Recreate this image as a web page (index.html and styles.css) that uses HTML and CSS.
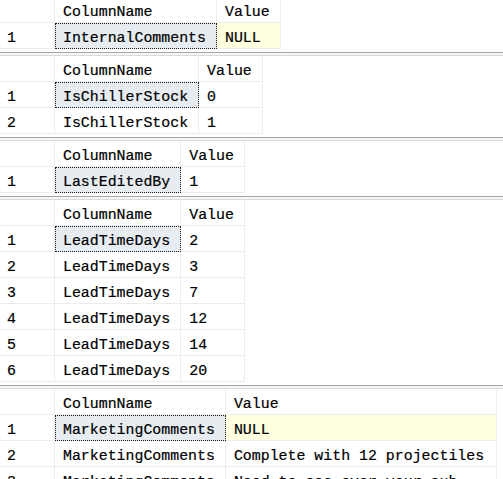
FILE: index.html
```html
<!DOCTYPE html>
<html>
<head>
<meta charset="utf-8">
<link rel="stylesheet" href="styles.css">
</head>
<body>
<div class="pane">
  <div class="grid first">
    <table>
      <tr class="head"><th class="rn"></th><th>ColumnName</th><th>Value</th></tr>
      <tr><td class="rn">1</td><td class="sel">InternalComments</td><td class="null">NULL</td></tr>
    </table>
  </div>
  <div class="splitter"></div>
  <div class="grid">
    <table>
      <tr class="head"><th class="rn"></th><th>ColumnName</th><th>Value</th></tr>
      <tr><td class="rn">1</td><td class="sel">IsChillerStock</td><td>0</td></tr>
      <tr><td class="rn">2</td><td>IsChillerStock</td><td>1</td></tr>
    </table>
  </div>
  <div class="splitter"></div>
  <div class="grid">
    <table>
      <tr class="head"><th class="rn"></th><th>ColumnName</th><th>Value</th></tr>
      <tr><td class="rn">1</td><td class="sel">LastEditedBy</td><td>1</td></tr>
    </table>
  </div>
  <div class="splitter"></div>
  <div class="grid">
    <table>
      <tr class="head"><th class="rn"></th><th>ColumnName</th><th>Value</th></tr>
      <tr><td class="rn">1</td><td class="sel">LeadTimeDays</td><td>2</td></tr>
      <tr><td class="rn">2</td><td>LeadTimeDays</td><td>3</td></tr>
      <tr><td class="rn">3</td><td>LeadTimeDays</td><td>7</td></tr>
      <tr><td class="rn">4</td><td>LeadTimeDays</td><td>12</td></tr>
      <tr><td class="rn">5</td><td>LeadTimeDays</td><td>14</td></tr>
      <tr><td class="rn">6</td><td>LeadTimeDays</td><td>20</td></tr>
    </table>
  </div>
  <div class="splitter"></div>
  <div class="grid">
    <table>
      <tr class="head"><th class="rn"></th><th>ColumnName</th><th class="wide">Value</th></tr>
      <tr><td class="rn">1</td><td class="sel">MarketingComments</td><td class="null">NULL</td></tr>
      <tr><td class="rn">2</td><td>MarketingComments</td><td>Complete with 12 projectiles</td></tr>
      <tr><td class="rn">3</td><td>MarketingComments</td><td>Need to see over your sub</td></tr>
    </table>
  </div>
</div>
</body>
</html>
```

FILE: styles.css
```css
html, body {
  margin: 0;
  padding: 0;
  background: #ffffff;
  overflow: hidden;
}

.pane {
  width: 503px;
  height: 479px;
  overflow: hidden;
  font-family: "Liberation Mono", "DejaVu Sans Mono", monospace;
  font-size: 14.9px;
  color: #000;
  -webkit-text-stroke: 0.2px #000;
}

.grid {
  background: #fff;
}

.grid.first {
  margin-top: -3px;
}

table {
  border-collapse: separate;
  border-spacing: 0;
}

th, td {
  box-sizing: border-box;
  height: 26px;
  padding: 5px 10px 0 8px;
  border-right: 1px solid #ececec;
  border-bottom: 1px solid #ececec;
  font-weight: normal;
  text-align: left;
  white-space: nowrap;
  vertical-align: top;
  line-height: 20px;
}

th.rn, td.rn {
  width: 55px;
  min-width: 55px;
  padding-left: 7px;
  padding-right: 0;
}

th.wide {
  width: 271px;
}

td.sel {
  background: #e7ecf1;
  outline: 1px dotted #1a1a1a;
  outline-offset: -1px;
}

td.null {
  background: #ffffe0;
}

.splitter {
  margin-top: 3px;
  height: 2px;
  border-top: 1px solid #a6a6a6;
  border-bottom: 1px solid #d9d9d9;
  background: #f7f7f7;
}
```
